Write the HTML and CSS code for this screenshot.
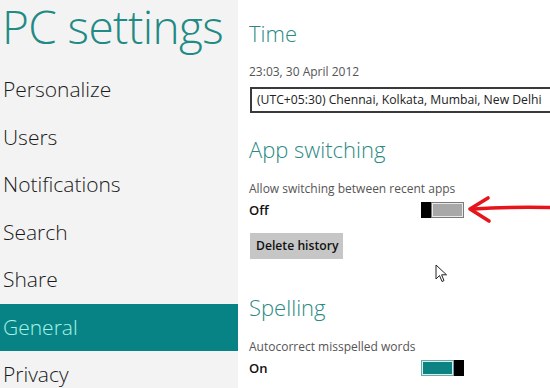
FILE: index.html
```html
<!DOCTYPE html>
<html>
<head>
<meta charset="utf-8">
<link rel="stylesheet" href="styles.css">
</head>
<body>
<div class="screen">
  <aside class="sidebar">
    <h1 class="title">PC settings</h1>
    <nav class="nav">
      <div class="nav-item">Personalize</div>
      <div class="nav-item">Users</div>
      <div class="nav-item">Notifications</div>
      <div class="nav-item">Search</div>
      <div class="nav-item">Share</div>
      <div class="nav-item active">General</div>
      <div class="nav-item">Privacy</div>
    </nav>
  </aside>
  <main class="content">
    <h2 class="heading h-time">Time</h2>
    <div class="desc d-date">23:03, 30 April 2012</div>
    <div class="select">(UTC+05:30) Chennai, Kolkata, Mumbai, New Delhi</div>

    <h2 class="heading h-app">App switching</h2>
    <div class="desc d-allow">Allow switching between recent apps</div>
    <div class="row r-off">
      <span class="state">Off</span>
      <span class="toggle off"><span class="track"></span></span>
    </div>
    <div class="button">Delete history</div>

    <h2 class="heading h-spell">Spelling</h2>
    <div class="desc d-auto">Autocorrect misspelled words</div>
    <div class="row r-on">
      <span class="state">On</span>
      <span class="toggle on"><span class="track"></span></span>
    </div>

    <svg class="arrow" width="84" height="30" viewBox="0 0 84 30">
      <path d="M84 12.5 C60 12 30 12.5 8 14" stroke="#e8141b" stroke-width="3.6" fill="none" stroke-linecap="round"/>
      <path d="M22 3 L4 14 L23 26" stroke="#e8141b" stroke-width="3.6" fill="none" stroke-linecap="round" stroke-linejoin="round"/>
    </svg>
    <svg class="cursor" width="13" height="19" viewBox="0 0 13 19">
      <path d="M1 1 L1 15 L4.5 11.5 L7 17.5 L9 16.6 L6.6 10.8 L11.5 10.8 Z" fill="#fff" stroke="#222" stroke-width="1" stroke-linejoin="round"/>
    </svg>
  </main>
</div>
</body>
</html>
```

FILE: styles.css
```css
* { box-sizing: border-box; }
html, body { margin: 0; padding: 0; }
body {
  width: 550px;
  height: 388px;
  overflow: hidden;
  font-family: "Open Sans", "Liberation Sans", sans-serif;
  background: #ffffff;
}
.screen {
  display: flex;
  width: 550px;
  height: 388px;
  overflow: hidden;
}
.sidebar {
  width: 238px;
  flex: none;
  background: #f3f3f3;
  display: flex;
  flex-direction: column;
}
.sidebar > * { flex: none; }
.title {
  margin: 0;
  height: 66px;
  padding-left: 2px;
  padding-top: 1px;
  font-size: 46px;
  line-height: 50px;
  font-weight: 300;
  color: #218a84;
  letter-spacing: -0.6px;
  white-space: nowrap;
}
.nav { display: flex; flex-direction: column; }
.nav-item {
  height: 47.5px;
  line-height: 47.5px;
  padding-left: 3px;
  font-size: 21px;
  font-weight: 300;
  color: #1a1a1a;
  white-space: nowrap;
}
.nav-item.active {
  background: #088385;
  color: #a6f3e8;
}
.content {
  position: relative;
  flex: 1;
  padding-left: 11px;
  padding-top: 18px;
  display: flex;
  flex-direction: column;
  align-items: flex-start;
  overflow: hidden;
}
.content > * { flex: none; }
.heading {
  margin: 0;
  font-size: 22px;
  line-height: 30px;
  font-weight: 300;
  color: #2b8a84;
  white-space: nowrap;
}
.desc {
  font-size: 12px;
  line-height: 16px;
  color: #555555;
  white-space: nowrap;
}
.d-date { margin-top: 16px; }
.select {
  margin-top: 7px;
  margin-left: 1px;
  width: 320px;
  height: 26px;
  border: 2px solid #3a3a3a;
  padding-left: 5px;
  font-size: 12.2px;
  line-height: 21px;
  color: #222;
  white-space: nowrap;
  background: #fff;
}
.h-app { margin-top: 21px; }
.d-allow { margin-top: 17px; }
.row {
  display: grid;
  grid-template-columns: 172px auto;
  align-items: start;
  height: 16px;
}
.r-off { margin-top: 5px; }
.state {
  font-size: 13px;
  line-height: 16px;
  font-weight: 600;
  color: #111;
}
.toggle {
  display: flex;
  width: 43px;
  height: 16px;
}
.toggle.off { border-left: 10px solid #000; }
.toggle.on { border-right: 10px solid #000; }
.track {
  flex: 1;
  border: 1px solid #7a7a7a;
  background: #a8a8a8;
  box-shadow: inset 0 0 0 1px #e8e8e8;
}
.toggle.on .track {
  background: #0d8282;
  border-color: #6aa9a9;
  box-shadow: inset 0 0 0 1px #d9eeee;
}
.button {
  margin-top: 15px;
  margin-left: 1px;
  width: 93px;
  height: 26px;
  background: #c6c6c6;
  font-size: 12.2px;
  font-weight: 600;
  line-height: 26px;
  padding-left: 6px;
  color: #111;
  white-space: nowrap;
}
.h-spell { margin-top: 33px; }
.d-auto { margin-top: 17px; }
.r-on { margin-top: 5px; }
.arrow {
  position: absolute;
  left: 228px;
  top: 195px;
}
.cursor {
  position: absolute;
  left: 197px;
  top: 264px;
}
```
